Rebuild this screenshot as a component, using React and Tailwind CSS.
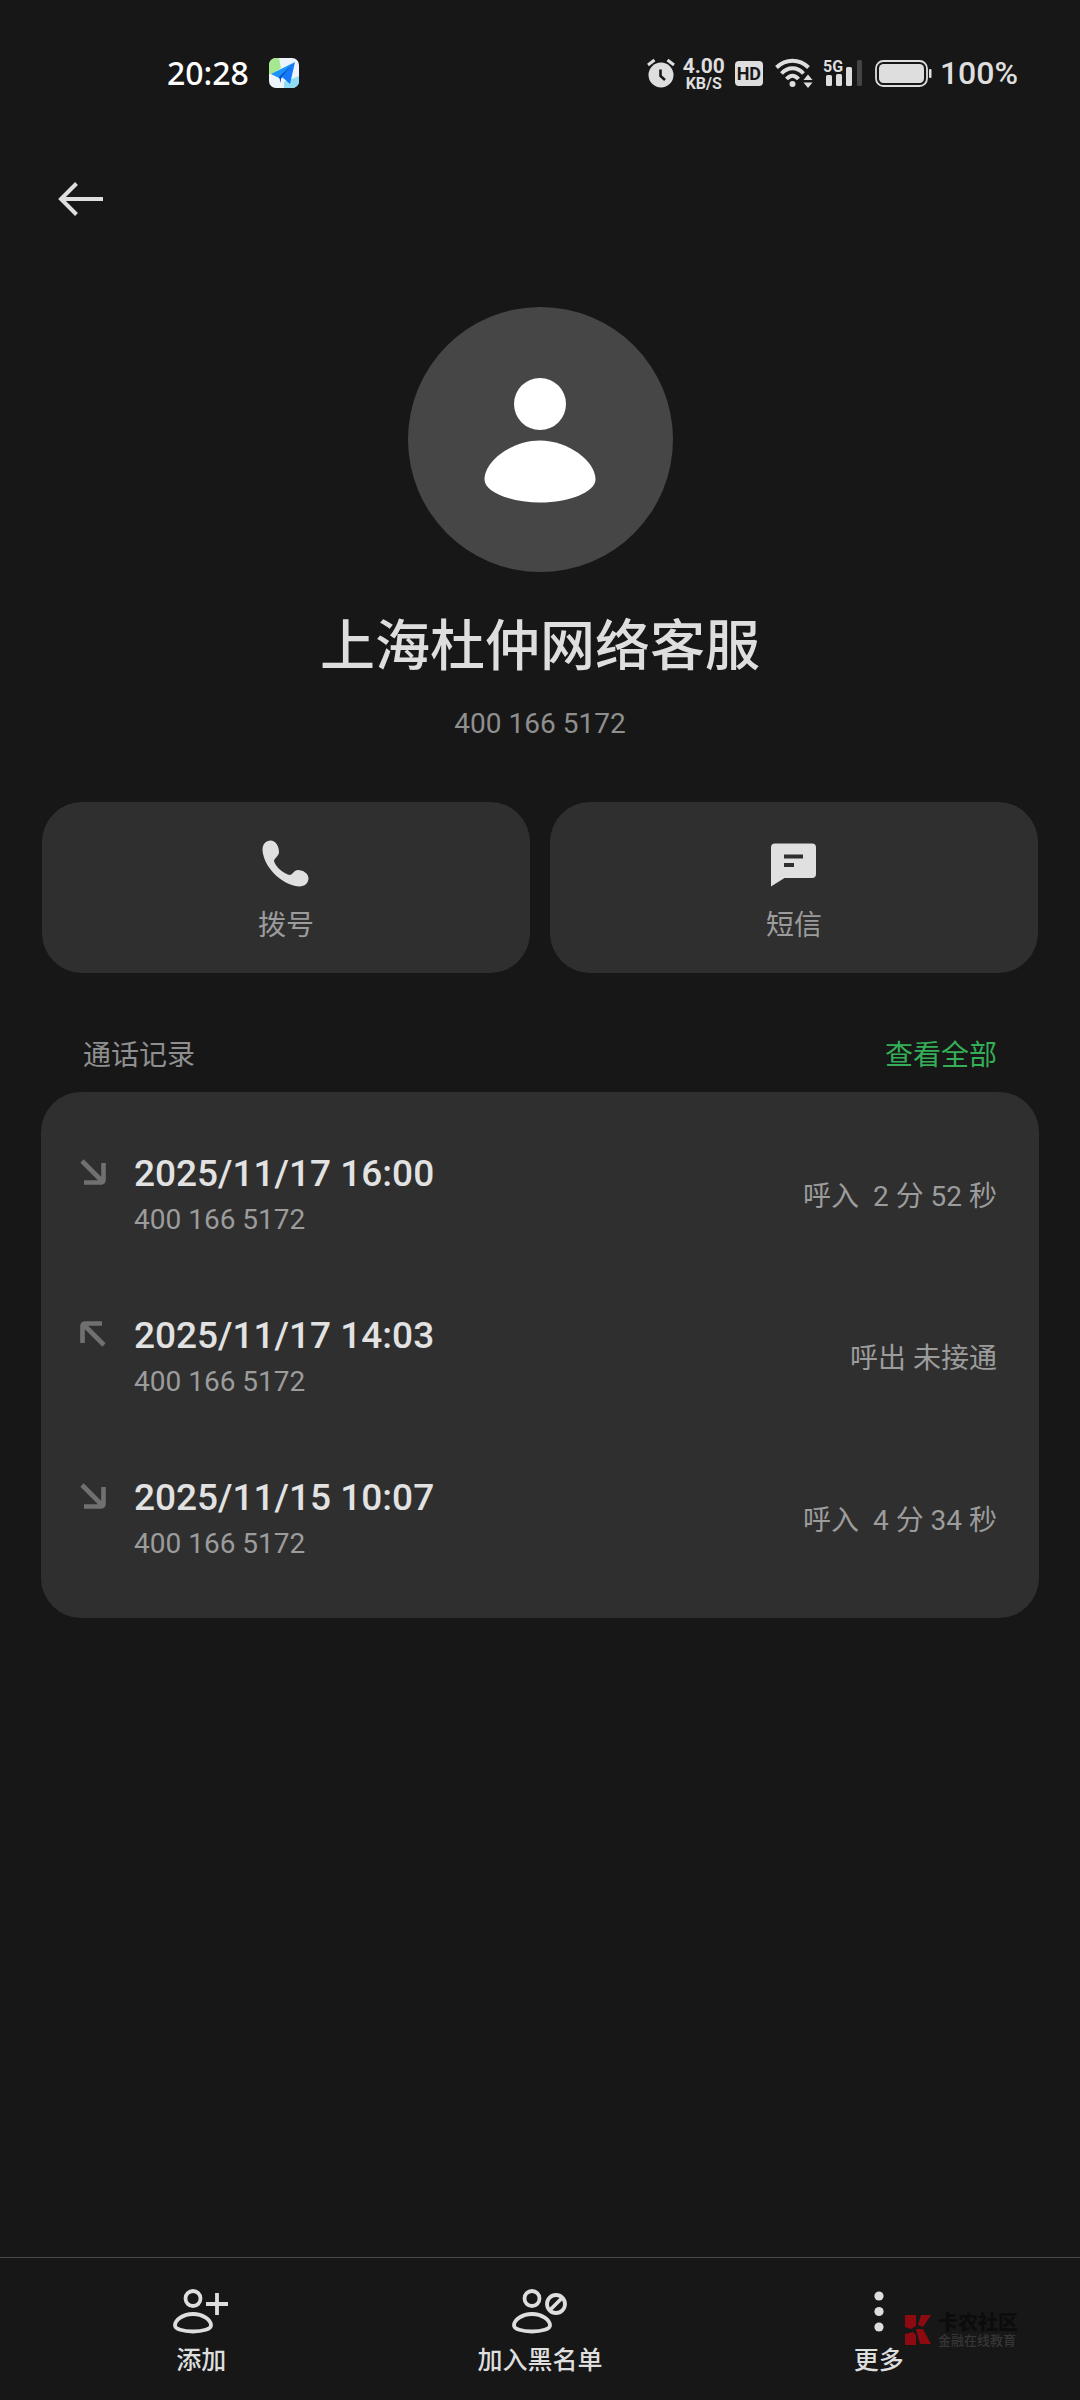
import React from 'react';

const CALLS = [
  { id: 1, direction: 'in', time: '2025/11/17 16:00', number: '400 166 5172', detail: '呼入  2 分 52 秒' },
  { id: 2, direction: 'out', time: '2025/11/17 14:03', number: '400 166 5172', detail: '呼出 未接通' },
  { id: 3, direction: 'in', time: '2025/11/15 10:07', number: '400 166 5172', detail: '呼入  4 分 34 秒' },
];

// --- Status bar icons ---

const MapAppIcon = () => (
  <svg className="w-[30px] h-[30px]" viewBox="0 0 30 30" aria-hidden="true">
    <defs>
      <clipPath id="map-app">
        <rect width="30" height="30" rx="7" />
      </clipPath>
    </defs>
    <g clipPath="url(#map-app)">
      <rect width="30" height="30" fill="#eef4fb" />
      <path d="M0 0h10l2 10-8 6H0z" fill="#a5e88f" />
      <path d="M15 24l15-6v12H15z" fill="#8fdcf5" />
      <path d="M2 16L26 4 12 21z" fill="#1b93ff" />
      <path d="M26 4L12 20v5l-2-6z" fill="#0b4fc4" />
      <path d="M26 4L13 19l8 7z" fill="#1478fa" />
    </g>
  </svg>
);

const AlarmIcon = () => (
  <svg className="w-7 h-[30px]" viewBox="0 0 28 30" fill="none" aria-hidden="true">
    <circle cx="14" cy="17" r="12.500" fill="#dedede" />
    <path d="M1 7l6.500-5M27 7l-6.500-5" stroke="#dedede" strokeWidth="3" />
    <path d="M13.500 11.500v6.500l4.500 4" stroke="#171717" strokeWidth="2.600" />
  </svg>
);

const WifiIcon = () => (
  <svg className="w-[38px] h-[30px]" viewBox="0 0 38 30" fill="none" aria-hidden="true">
    <g stroke="#dedede" strokeWidth="4">
      <path d="M1.500 9.500C11 .500 24 .500 33.500 9.500" />
      <path d="M6.500 15.500C13 8.500 22 8.500 28.500 15.500" />
      <path d="M11.500 21C15.500 16.500 19.500 16.500 23.500 21" />
    </g>
    <circle cx="17.500" cy="26" r="3" fill="#dedede" />
    <path d="M28.500 22l4.500-5.500 4.500 5.500zM28.500 24.500h9L33 30z" fill="#dedede" />
  </svg>
);

const SignalIcon = () => (
  <svg className="w-10 h-[34px]" viewBox="0 0 40 34" fill="#dedede" aria-hidden="true">
    <text x="0" y="16" className="text-[16px] font-bold" fontFamily="Roboto, sans-serif">5G</text>
    <rect x="3" y="19" width="6" height="11" rx="1.500" />
    <rect x="13" y="18" width="6" height="12" rx="1.500" />
    <rect x="23" y="11" width="6" height="19" rx="1.500" />
    <rect x="34" y="4" width="5" height="26" rx="1.500" fill="#444444" />
  </svg>
);

const BatteryIcon = () => (
  <svg className="w-[57px] h-[27px]" viewBox="0 0 57 27" fill="none" aria-hidden="true">
    <rect x="1" y="1" width="51" height="25" rx="7.500" stroke="#dedede" strokeWidth="1.800" />
    <rect x="4" y="4" width="45" height="19" rx="4.500" fill="#dedede" />
    <rect x="54" y="9" width="2.500" height="9" rx="1" fill="#dedede" />
  </svg>
);

// --- Page icons ---

const BackIcon = () => (
  <svg className="w-12 h-10" viewBox="0 0 48 40" fill="none" stroke="#dedede" strokeWidth="4" aria-hidden="true">
    <path d="M19.500 4.500L4 20l15.500 15.500M4 20h42" />
  </svg>
);

const PersonIcon = () => (
  <svg className="w-28 h-32" viewBox="0 0 112 128" fill="#ffffff" aria-hidden="true">
    <circle cx="56" cy="28" r="26" />
    <path d="M56 64.500C84 64.500 111.500 85 111.500 103.500C111.500 116 85 126.500 56 126.500C27 126.500 .500 116 .500 103.500C.500 85 28 64.500 56 64.500z" />
  </svg>
);

const PhoneIcon = () => (
  <svg className="w-12 h-12" viewBox="0 0 48 48" fill="#e0e0e0" aria-hidden="true">
    <path d="M8.500 .500C4 .500 .500 4 .500 10C1.500 26 18 44.500 37 46.500C42.500 46.700 46.500 43 46.500 38.500C46.500 33.500 41 30 36 30C32 30 30.500 35 27.500 35C21.500 33.500 13.500 27 12 21C12.200 18 17 16 17 12C17 6 13.500 .500 8.500 .500z" />
  </svg>
);

const MessageIcon = () => (
  <svg className="w-12 h-12" viewBox="0 0 48 48" aria-hidden="true">
    <path d="M5 3.500h37a4 4 0 0 1 4 4V34a4 4 0 0 1-4 4H14.500L1 46.500v-39a4 4 0 0 1 4-4z" fill="#e0e0e0" />
    <path d="M14 14.500h19v4H14zM14 23h10v4H14z" fill="#2f2f2f" />
  </svg>
);

const DirectionIcon = ({ direction }) => (
  <svg className="w-[26px] h-[26px] shrink-0" viewBox="0 0 26 26" fill="none" stroke="#707070" strokeWidth="4.600" aria-hidden="true">
    {direction === 'in' ? (
      <path d="M2 2l21 21M4 23.500h17a2.500 2.500 0 0 0 2.500-2.500V4" />
    ) : (
      <path d="M24 24L3 3M22 2.500H5A2.500 2.500 0 0 0 2.500 5v17" />
    )}
  </svg>
);

const PersonOutline = () => (
  <>
    <circle cx="20" cy="10.500" r="7.500" />
    <path d="M20 26C30 26 38 32 38 37.500C38 41 30 43.500 20 43.500C10 43.500 2 41 2 37.500C2 32 10 26 20 26z" />
  </>
);

const AddIcon = () => (
  <svg className="w-14 h-12" viewBox="0 0 56 48" fill="none" stroke="#dedede" strokeWidth="3.800" aria-hidden="true">
    <PersonOutline />
    <path d="M33 16h22M44 5v22" />
  </svg>
);

const BlockIcon = () => (
  <svg className="w-14 h-12" viewBox="0 0 56 48" fill="none" stroke="#dedede" strokeWidth="3.800" aria-hidden="true">
    <PersonOutline />
    <circle cx="44" cy="16" r="9" />
    <path d="M38 22l12-12" />
  </svg>
);

const MoreIcon = () => (
  <svg className="w-14 h-12" viewBox="0 0 56 48" fill="#dedede" aria-hidden="true">
    <circle cx="28" cy="8" r="4.600" />
    <circle cx="28" cy="23.500" r="4.600" />
    <circle cx="28" cy="39" r="4.600" />
  </svg>
);

const ACTIONS = [
  { label: '添加', Icon: AddIcon },
  { label: '加入黑名单', Icon: BlockIcon },
  { label: '更多', Icon: MoreIcon },
];

function StatusBar() {
  return (
    <header className="flex items-center justify-between h-[146px] pl-[167px] pr-[62px] text-[#dedede]">
      <div className="flex items-center gap-5">
        <time className="font-['Noto_Sans',sans-serif] text-[32px] leading-10 font-medium text-white">20:28</time>
        <MapAppIcon />
      </div>
      <div className="flex items-center">
        <AlarmIcon />
        <div className="ml-2 pt-1 flex flex-col items-center font-bold">
          <span className="text-[21px] leading-[18px]">4.00</span>
          <span className="text-[16px] leading-[18px]">KB/S</span>
        </div>
        <span className="ml-[10px] flex items-center justify-center w-7 h-[25px] rounded bg-[#dedede] text-[18px] font-bold text-[#171717]">HD</span>
        <div className="ml-3"><WifiIcon /></div>
        <div className="ml-[10px]"><SignalIcon /></div>
        <div className="ml-3"><BatteryIcon /></div>
        <span className="ml-2 text-[32px] leading-10 font-medium">100%</span>
      </div>
    </header>
  );
}

function QuickAction({ label, children }) {
  return (
    <button type="button" className="flex flex-1 flex-col items-center gap-4 rounded-[40px] bg-[#2f2f2f] pt-[38px] pb-[25px] text-[28px] leading-[44px] text-[#9c9c9c]">
      {children}
      {label}
    </button>
  );
}

function CallRow({ call }) {
  return (
    <li className="flex items-center justify-between h-[162px]">
      <div className="flex items-start gap-7">
        <div className="pt-2"><DirectionIcon direction={call.direction} /></div>
        <div>
          <p className="text-[37px] leading-[46px] font-medium text-[#e2e2e2]">{call.time}</p>
          <p className="text-[28px] leading-[46px] text-[#9c9c9c]">{call.number}</p>
        </div>
      </div>
      <p className="whitespace-pre text-[28px] leading-9 text-[#9c9c9c]">{call.detail}</p>
    </li>
  );
}

function Watermark() {
  return (
    <div className="absolute right-[62px] bottom-[52px] flex items-center gap-1" aria-hidden="true">
      <svg className="w-8 h-9" viewBox="0 0 32 36">
        <path d="M3 3h11v11l-5 3-6-2zM19 3h10l-8 12-5-2zM3 22l8-2 3 3v10H3zM14 17l7 0 8 15H18z" fill="#8c0a10" />
      </svg>
      <div className="flex flex-col">
        <span className="text-[20px] leading-[22px] font-black text-[#0c0c0c]">卡农社区</span>
        <span className="text-[13px] leading-[14px] font-medium text-[#363636]">金融在线教育</span>
      </div>
    </div>
  );
}

export default function App() {
  return (
    <div className="relative flex min-h-screen flex-col bg-[#171717] font-[Roboto,'Noto_Sans_CJK_SC',sans-serif]">
      <StatusBar />

      <nav className="px-[57px] pt-[33px]">
        <button type="button" aria-label="返回" className="block">
          <BackIcon />
        </button>
      </nav>

      <main className="flex flex-1 flex-col px-[41px]">
        <section className="flex flex-col items-center pt-[88px]">
          <div className="flex items-center justify-center w-[265px] h-[265px] rounded-full bg-[#464646]">
            <PersonIcon />
          </div>
          <h1 className="mt-[34px] text-[55px] leading-[80px] font-medium text-[#dedede]">上海杜仲网络客服</h1>
          <p className="mt-5 text-[28px] leading-9 text-[#8f8f8f]">400 166 5172</p>
        </section>

        <section className="mt-[60px] flex gap-5 px-px">
          <QuickAction label="拨号"><PhoneIcon /></QuickAction>
          <QuickAction label="短信"><MessageIcon /></QuickAction>
        </section>

        <section className="mt-[63px]">
          <div className="flex items-center justify-between px-[42px] pb-4 text-[28px] leading-10">
            <h2 className="text-[#8f8f8f]">通话记录</h2>
            <a href="#all" className="text-[#34ae57]">查看全部</a>
          </div>
          <ul className="rounded-[40px] bg-[#2f2f2f] pl-[39px] pr-[42px] pt-6 pb-4">
            {CALLS.map((call) => (
              <CallRow key={call.id} call={call} />
            ))}
          </ul>
        </section>
      </main>

      <footer className="flex border-t border-[#484848] px-8 pt-[30px] pb-5">
        {ACTIONS.map(({ label, Icon }) => (
          <button key={label} type="button" className="flex flex-1 basis-0 flex-col items-center gap-[6px] text-[25px] leading-[38px] font-medium text-[#dedede]">
            <Icon />
            {label}
          </button>
        ))}
      </footer>

      <Watermark />
    </div>
  );
}
